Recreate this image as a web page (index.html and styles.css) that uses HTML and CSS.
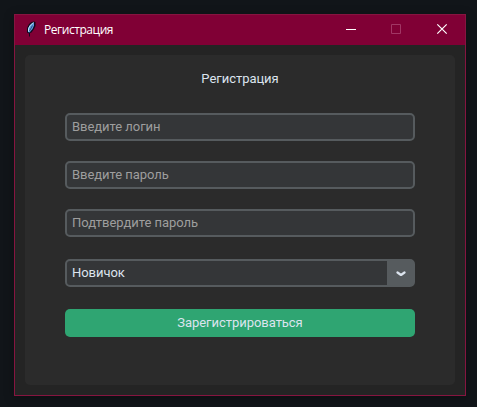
FILE: index.html
```html
<!DOCTYPE html>
<html lang="ru">
<head>
<meta charset="utf-8">
<title>Регистрация</title>
<link rel="stylesheet" href="styles.css">
</head>
<body>
<main class="window">
  <header class="titlebar">
    <svg class="feather" width="10" height="16" viewBox="0 0 10 16">
      <path d="M8 0.500 9.500 1v4L8 8 5.500 11.500 4 12v3.500H3V12.500L1 11.500V7l2-4 2.500-2z" fill="#10081c"/>
      <path d="M8 1.500v3L6.500 8 3.500 11.500 2 11V7.500L4.500 3.500z" fill="#5d9be0"/>
      <path d="M7.500 1.500 4.500 4 2.500 7.500v3" stroke="#c5e4f2" fill="none"/>
      <path d="M6.500 4.500 3.500 10" stroke="#183055" stroke-width=".7"/>
    </svg>
    <span class="caption">Регистрация</span>
    <div class="controls">
      <svg width="46" height="30" viewBox="0 0 46 30"><path d="M18 14.500h10" stroke="#fff"/></svg>
      <svg width="46" height="30" viewBox="0 0 46 30"><path d="M17.500 9.500h9v9h-9z" stroke="#a13664" fill="none"/></svg>
      <svg width="46" height="30" viewBox="0 0 46 30"><path d="m17.300 9.300 9.400 9.400m0-9.400-9.400 9.400" stroke="#fff" stroke-width="1.200"/></svg>
    </div>
  </header>
  <form class="panel">
    <h1 class="heading">Регистрация</h1>
    <input class="field" type="text" placeholder="Введите логин">
    <input class="field" type="text" placeholder="Введите пароль">
    <input class="field" type="text" placeholder="Подтвердите пароль">
    <div class="field combo">
      <span>Новичок</span>
      <div class="arrow"><svg width="10" height="6" viewBox="0 0 10 6"><path d="M1.500 1.500 5 4l3.500-2.500" fill="none" stroke="#dce4ee" stroke-width="2.200" stroke-linecap="round" stroke-linejoin="round"/></svg></div>
    </div>
    <button class="submit" type="button">Зарегистрироваться</button>
  </form>
</main>
</body>
</html>
```
FILE: styles.css
```css
* { box-sizing: border-box; }

body {
  margin: 0;
  height: 407px;
  padding: 14px 11px 11px 14px;
  background: #111519;
  font: 13px/16px Roboto, sans-serif;
  letter-spacing: -.04px;
  overflow: hidden;
}

.window {
  width: 452px;
  height: 382px;
  border: 1px solid #861540;
  background: #242424;
  box-shadow: 0 2px 10px rgba(0, 0, 0, .3);
}

.titlebar {
  display: flex;
  align-items: center;
  height: 30px;
  padding-left: 11px;
  background: #800035;
}

.feather { margin-top: -2px; }

.caption {
  margin-left: 8px;
  color: #fff;
  font: 12px/16px "Open Sans", sans-serif;
  letter-spacing: -.45px;
}

.controls {
  display: flex;
  margin: 0 -1px 0 auto;
}

.panel {
  display: flex;
  flex-direction: column;
  height: 330px;
  margin: 10px;
  padding: 16px 40px 0;
  border-radius: 5px;
  background: #2b2b2b;
}

.heading {
  margin: 0 0 26px;
  color: #dce4ee;
  font: inherit;
  text-align: center;
}

.field {
  width: 350px;
  height: 28px;
  margin: 0 0 20px;
  padding: 0 5px 2px;
  border: 2px solid #565b5e;
  border-radius: 5px;
  background: #343638;
  color: #dce4ee;
  font: inherit;
  letter-spacing: inherit;
}

.field::placeholder {
  color: #9e9e9e;
  opacity: 1;
}

.combo {
  display: flex;
  align-items: center;
  margin: 2px 0 22px;
  padding: 0 0 0 5px;
}

.arrow {
  display: flex;
  align-items: center;
  justify-content: center;
  width: 26px;
  height: 24px;
  margin-left: auto;
  padding: 2px 0 0 2px;
  background: #565b5e;
}

.submit {
  height: 28px;
  padding: 0;
  border: 0;
  border-radius: 5px;
  background: #2fa572;
  color: #dce4ee;
  font: inherit;
  letter-spacing: inherit;
}
```
